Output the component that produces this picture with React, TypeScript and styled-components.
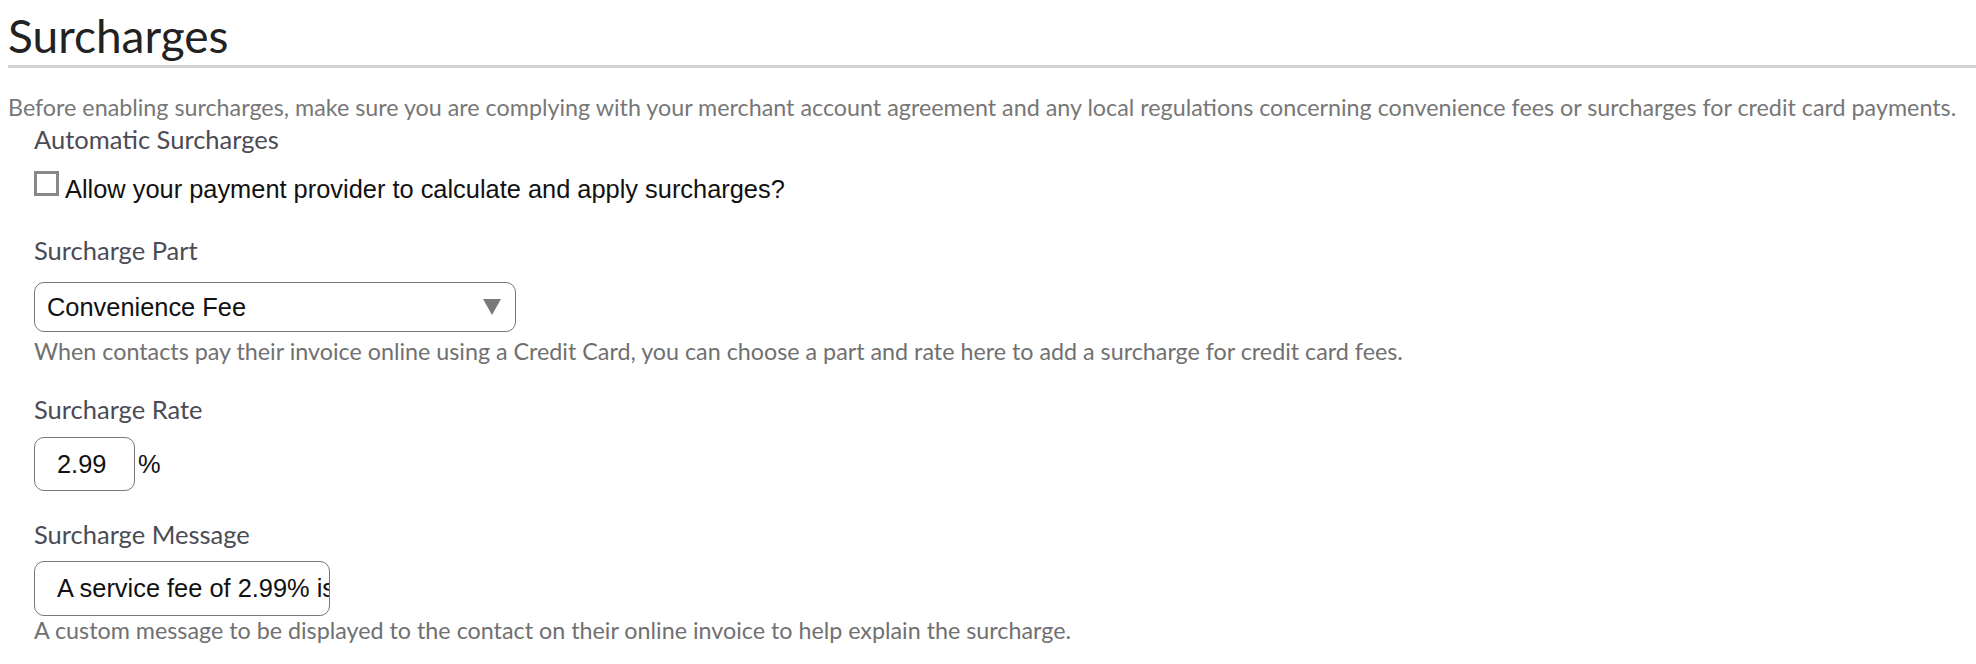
import styled, { createGlobalStyle } from "styled-components";

const GlobalStyle = createGlobalStyle`
  html, body {
    margin: 0;
    padding: 0;
    background: #fff;
  }
  body {
    font-family: Lato, "Noto Sans", sans-serif;
  }
`;

const Page = styled.div`
  padding: 0 0 0 8px;
`;

const Title = styled.h1`
  margin: 8px 0 0 0;
  padding-bottom: 1px;
  font-size: 46px;
  line-height: 56px;
  font-weight: 400;
  color: #222;
  border-bottom: 3px solid #d2d2d2;
`;

const Intro = styled.p`
  margin: 26px 0 0 0;
  font-size: 23.3px;
  line-height: 27px;
  color: #777;
  white-space: nowrap;
`;

const Form = styled.div`
  padding-left: 26px;
  display: flex;
  flex-direction: column;
  align-items: flex-start;
`;

const Label = styled.div<{ $gap: number }>`
  margin-top: ${(p) => p.$gap}px;
  font-size: 25.5px;
  line-height: 30px;
  color: #4b4b55;
`;

const Hint = styled.div<{ $gap: number }>`
  margin-top: ${(p) => p.$gap}px;
  font-size: 23.3px;
  line-height: 27px;
  color: #707070;
`;

const CheckRow = styled.label`
  margin-top: 17px;
  display: flex;
  align-items: flex-end;
  gap: 6px;
  font-family: "Liberation Sans", Arial, sans-serif;
  font-size: 25.4px;
  line-height: 30px;
  color: #111;
`;

const Box = styled.span`
  box-sizing: border-box;
  width: 25px;
  height: 25px;
  margin-bottom: 8px;
  border: 3px solid #888;
  background: #fff;
`;

const Select = styled.div`
  box-sizing: border-box;
  margin-top: 17px;
  width: 482px;
  height: 50px;
  padding: 0 14px 0 12px;
  display: flex;
  align-items: center;
  justify-content: space-between;
  border: 1px solid #777;
  border-radius: 10px;
  font-family: "Liberation Sans", Arial, sans-serif;
  font-size: 25.4px;
  color: #111;
`;

const InputRow = styled.div<{ $gap: number }>`
  margin-top: ${(p) => p.$gap}px;
  display: flex;
  align-items: center;
  gap: 3px;
  font-family: "Liberation Sans", Arial, sans-serif;
  font-size: 25.4px;
  color: #111;
`;

const TextInput = styled.input<{ $w: number; $h: number }>`
  box-sizing: border-box;
  width: ${(p) => p.$w}px;
  height: ${(p) => p.$h}px;
  padding: 0 0 0 22px;
  border: 1px solid #777;
  border-radius: 10px;
  font-family: "Liberation Sans", Arial, sans-serif;
  font-size: 25.4px;
  color: #111;
  background: #fff;
  outline: none;
`;

const Arrow = () => (
  <svg width="18" height="16" viewBox="0 0 18 16">
    <path d="M0 0 H18 L9 16 Z" fill="#7a7a7a" />
  </svg>
);

export default function App() {
  return (
    <Page>
      <GlobalStyle />
      <Title>Surcharges</Title>
      <Intro>
        Before enabling surcharges, make sure you are complying with your merchant account
        agreement and any local regulations concerning convenience fees or surcharges for credit
        card payments.
      </Intro>
      <Form>
        <Label $gap={3}>Automatic Surcharges</Label>
        <CheckRow>
          <Box />
          Allow your payment provider to calculate and apply surcharges?
        </CheckRow>
        <Label $gap={31}>Surcharge Part</Label>
        <Select>
          <span>Convenience Fee</span>
          <Arrow />
        </Select>
        <Hint $gap={6}>
          When contacts pay their invoice online using a Credit Card, you can choose a part and
          rate here to add a surcharge for credit card fees.
        </Hint>
        <Label $gap={29}>Surcharge Rate</Label>
        <InputRow $gap={13}>
          <TextInput $w={101} $h={54} readOnly defaultValue="2.99" />
          <span>%</span>
        </InputRow>
        <Label $gap={28}>Surcharge Message</Label>
        <InputRow $gap={12}>
          <TextInput
            $w={296}
            $h={55}
            readOnly
            defaultValue="A service fee of 2.99% is applied to all credit card payments."
          />
        </InputRow>
        <Hint $gap={1}>
          A custom message to be displayed to the contact on their online invoice to help explain
          the surcharge.
        </Hint>
      </Form>
    </Page>
  );
}
